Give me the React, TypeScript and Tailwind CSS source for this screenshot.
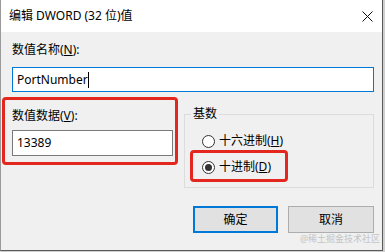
import React from 'react'

const font = { fontFamily: '"Noto Sans", "Noto Sans CJK SC", sans-serif' }

function Radio({ checked, children }: { checked?: boolean; children: React.ReactNode }) {
  return (
    <div className="flex items-center h-[16px]">
      <span className="w-[13px] h-[13px] rounded-full border border-[#333] bg-white flex items-center justify-center">
        {checked && <span className="w-[7px] h-[7px] rounded-full bg-[#333]" />}
      </span>
      <span className="ml-[4px] text-[12px] leading-[16px]">{children}</span>
    </div>
  )
}

export default function App() {
  return (
    <div className="w-[385px] h-[252px] bg-[#cfcfcf] text-black" style={font}>
      <div className="relative w-[383px] h-[251px] bg-[#f0f0f0] border-l border-l-[#9a9a9a] border-r border-r-[#5a5a5a] border-b border-b-[#5a5a5a] flex flex-col">
        {/* title bar */}
        <div className="h-[32px] bg-white flex items-center justify-between pl-[8px] pr-[9px] shrink-0">
          <span className="text-[12px] leading-[16px]">编辑 DWORD (32 位)值</span>
          <svg width="11" height="11" viewBox="0 0 11 11" stroke="#111" strokeWidth="1">
            <path d="M0.5 0.5 L10.5 10.5 M10.5 0.5 L0.5 10.5" />
          </svg>
        </div>

        <div className="pl-[11px] pr-[8px]">
          <div className="mt-[10px] text-[12px] leading-[16px]">
            数值名称(<span className="underline">N</span>):
          </div>
          <div className="mt-[9px] h-[25px] w-[362px] border border-[#0078d7] bg-white flex items-center pl-[4px] text-[12px]">
            PortNumber<span className="w-px h-[16px] bg-black" />
          </div>

          <div className="flex mt-[5px]">
            {/* left: value data */}
            <div className="ml-[-10px] w-[176px] h-[68px] border-[3px] border-[#e3261e] rounded-[4px] pl-[7px] pt-[8px]">
              <div className="text-[12px] leading-[16px]">
                数值数据(<span className="underline">V</span>):
              </div>
              <div className="mt-[6px] w-[161px] h-[26px] border border-[#7a7a7a] bg-white flex items-center pl-[4px] text-[12px]">
                13389
              </div>
            </div>

            {/* right: base group */}
            <div className="relative ml-[6px] mt-[17px] w-[190px] h-[74px] border border-[#dcdcdc]">
              <span className="absolute left-[6px] top-[-9px] px-[2px] bg-[#f0f0f0] text-[12px] leading-[16px]">基数</span>
              <div className="pt-[18px] pl-[17px]">
                <Radio>
                  十六进制(<span className="underline">H</span>)
                </Radio>
              </div>
              <div className="mt-[1px] ml-[5px] w-[98px] h-[32px] border-[3px] border-[#e3261e] rounded-[4px] pl-[9px] pt-[6px]">
                <Radio checked>
                  十进制(<span className="underline">D</span>)
                </Radio>
              </div>
            </div>
          </div>

          <div className="flex justify-end gap-[10px] mt-[18px]">
            <button className="w-[85px] h-[27px] border-2 border-[#0078d7] bg-[#e1e1e1] text-[12px]">确定</button>
            <button className="w-[86px] h-[27px] border border-[#adadad] bg-[#e1e1e1] text-[12px]">取消</button>
          </div>
        </div>

        <span className="absolute right-[2px] bottom-[6px] text-[9px] leading-[10px] text-[#c4c4c4]">@稀土掘金技术社区</span>
      </div>
    </div>
  )
}
